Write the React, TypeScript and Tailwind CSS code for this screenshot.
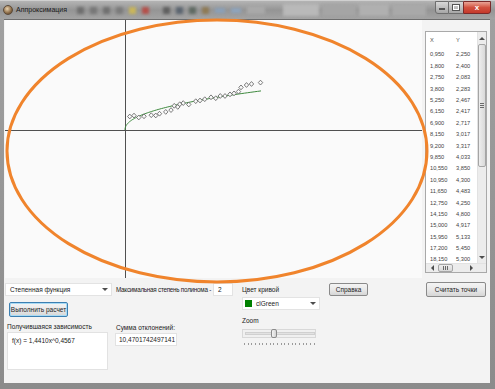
import React from 'react';

const tableData: [string, string][] = [
  ['0,950', '2,250'],
  ['1,800', '2,400'],
  ['2,750', '2,083'],
  ['3,800', '2,283'],
  ['5,250', '2,467'],
  ['6,150', '2,417'],
  ['6,900', '2,717'],
  ['8,150', '3,017'],
  ['9,200', '3,317'],
  ['9,850', '4,033'],
  ['10,550', '3,850'],
  ['10,950', '4,300'],
  ['11,650', '4,483'],
  ['12,750', '4,250'],
  ['14,150', '4,800'],
  ['15,000', '4,917'],
  ['15,950', '5,133'],
  ['17,200', '5,450'],
  ['18,150', '5,300'],
];

// rest of the points, past the visible rows of the list
const morePoints: [number, number][] = [
  [19.05, 5.67], [20, 5.67], [21, 5.94], [21.8, 6.1], [22.7, 6.4], [23.2, 7.1], [24.3, 7.5], [25.3, 7.67], [27.1, 7.9],
];

const num = (s: string) => parseFloat(s.replace(',', '.'));

const FONT = "font-['Liberation_Sans',Arial,sans-serif]";

const Chart: React.FC = () => {
  const ox = 120, oy = 110, sx = 5, sy = 6;
  const pts: [number, number][] = [...tableData.map(([x, y]) => [num(x), num(y)] as [number, number]), ...morePoints];
  const curve = Array.from({ length: 80 }, (_, i) => {
    const x = 27.2 * Math.pow(i / 79, 2);
    return `${(ox + x * sx).toFixed(2)},${(oy - 1.441 * Math.pow(x, 0.4567) * sy).toFixed(2)}`;
  }).join(' ');

  return (
    <svg width={417} height={258} className="block">
      <line x1={0} y1={oy + 0.5} x2={417} y2={oy + 0.5} stroke="#505050" strokeWidth={1} />
      <line x1={ox + 0.5} y1={0} x2={ox + 0.5} y2={258} stroke="#505050" strokeWidth={1} />
      <polyline points={curve} fill="none" stroke="#3f8a3f" strokeWidth={1} />
      {pts.map(([x, y], i) => {
        const cx = ox + x * sx, cy = oy - y * sy;
        return (
          <polygon
            key={i}
            points={`${cx},${cy - 2.4} ${cx + 2.2},${cy} ${cx},${cy + 2.4} ${cx - 2.2},${cy}`}
            fill="#fafafa"
            stroke="#5a5a5a"
            strokeWidth={0.8}
          />
        );
      })}
    </svg>
  );
};

const WinButton: React.FC<{ label: string; className?: string; def?: boolean }> = ({ label, className = '', def }) => (
  <div
    className={`flex items-center justify-center whitespace-nowrap rounded-[2px] border text-[6.5px] text-[#222] bg-gradient-to-b from-[#f4f4f4] via-[#e9e9e9] to-[#d6d6d6] ${
      def ? 'border-[#3c7fb1] shadow-[inset_0_0_0_1px_#a8dbf5]' : 'border-[#8a8a8a]'
    } ${className}`}
  >
    {label}
  </div>
);

const Arrow: React.FC<{ dir: 'up' | 'down' | 'left' | 'right' }> = ({ dir }) => {
  const p = {
    up: '0,3 3,0 6,3',
    down: '0,0 3,3 6,0',
    left: '3,0 0,3 3,6',
    right: '0,0 3,3 0,6',
  }[dir];
  const w = dir === 'up' || dir === 'down' ? 6 : 3;
  const h = dir === 'up' || dir === 'down' ? 3 : 6;
  return (
    <svg width={w} height={h} className="block">
      <polygon points={p} fill="#4d4d4d" />
    </svg>
  );
};

const PointsTable: React.FC = () => (
  <div className="w-[62px] h-[242px] bg-white border border-[#a9a9a9] flex flex-col">
    <div className="flex flex-1 min-h-0">
      <div className="flex-1 overflow-hidden text-[5.7px] text-[#444]">
        <div className="h-[17px] flex items-center text-[#555]">
          <span className="w-[30px] pl-[4px]">X</span>
          <span>Y</span>
        </div>
        {tableData.map(([x, y]) => (
          <div key={x} className="h-[11.4px] flex items-center">
            <span className="w-[30px] pl-[4px]">{x}</span>
            <span>{y}</span>
          </div>
        ))}
      </div>
      <div className="w-[9px] bg-[#ececec] border-l border-[#e2e2e2] flex flex-col items-center">
        <div className="h-[12px] flex items-center justify-center">
          <Arrow dir="up" />
        </div>
        <div className="w-[8px] h-[123px] bg-gradient-to-r from-[#eeeeee] to-[#d9d9d9] border border-[#a5a5a5] rounded-[2px] flex flex-col items-center justify-center gap-[1px]">
          <div className="w-[4px] h-[1px] bg-[#6a6a6a]" />
          <div className="w-[4px] h-[1px] bg-[#6a6a6a]" />
          <div className="w-[4px] h-[1px] bg-[#6a6a6a]" />
        </div>
        <div className="flex-1" />
        <div className="h-[12px] flex items-center justify-center">
          <Arrow dir="down" />
        </div>
      </div>
    </div>
    <div className="h-[9px] flex bg-[#ececec] border-t border-[#e2e2e2]">
      <div className="flex-1 flex items-center">
        <div className="w-[12px] flex justify-center">
          <Arrow dir="left" />
        </div>
        <div className="w-[15px] h-[8px] bg-gradient-to-b from-[#eeeeee] to-[#d9d9d9] border border-[#a5a5a5] rounded-[2px] flex items-center justify-center gap-[1px]">
          <div className="w-[1px] h-[4px] bg-[#6a6a6a]" />
          <div className="w-[1px] h-[4px] bg-[#6a6a6a]" />
          <div className="w-[1px] h-[4px] bg-[#6a6a6a]" />
        </div>
        <div className="flex-1" />
        <div className="w-[12px] flex justify-center">
          <Arrow dir="right" />
        </div>
      </div>
      <div className="w-[9px] bg-[#ececec]" />
    </div>
  </div>
);

const TitleBar: React.FC = () => (
  <div className="h-[19px] flex items-center overflow-hidden bg-gradient-to-b from-[#b4b4b4] via-[#959595] to-[#a3a3a3] border-t border-[#d0d0d0]">
    <div className="ml-[3px] w-[10px] h-[10px] rounded-full bg-[radial-gradient(circle_at_40%_35%,#e9d2ae,#8a6a45_60%,#4d3a28)] border border-[#5b4a3a]" />
    <span className={`ml-[3px] text-[7px] text-[#1a1a1a] ${FONT}`}>Аппроксимация</span>
    <div className="ml-[10px] flex items-center gap-[6px] blur-[1.5px]">
      <div className="w-[7px] h-[7px] bg-[#6e6e6e]" />
      <div className="w-[7px] h-[7px] bg-[#777]" />
      <div className="w-[7px] h-[7px] bg-[#707070]" />
      <div className="w-[7px] h-[7px] bg-[#7a7a7a]" />
      <div className="w-[7px] h-[7px] bg-[#c9b65a]" />
      <div className="w-[7px] h-[7px] bg-[#b5504a]" />
      <div className="ml-[8px] w-[7px] h-[7px] bg-[#5f5f5f]" />
      <div className="w-[7px] h-[7px] bg-[#5b6570]" />
      <div className="w-[7px] h-[7px] bg-[#5f6a63]" />
      <div className="w-[7px] h-[7px] bg-[#8f7a55]" />
      <div className="w-[10px] h-[5px] bg-[#8aa0b8]" />
      <div className="w-[10px] h-[5px] bg-[#8ea4bd]" />
      <div className="w-[18px] h-[8px] bg-[#a9a9a9]" />
    </div>
    <div className="ml-[18px] flex items-center gap-[3px] blur-[1.5px]">
      <div className="w-[36px] h-[12px] bg-[#b9b9b9]" />
      <div className="w-[34px] h-[12px] bg-[#a5a5a5]" />
      <div className="w-[30px] h-[12px] bg-[#b0b0b0]" />
      <div className="w-[34px] h-[12px] bg-[#a9a9a9]" />
    </div>
    <div className="flex-1" />
    <div className="self-start flex mr-[4px]">
      <div className="w-[14px] h-[13px] border border-[#6e6e6e] rounded-bl-[3px] bg-gradient-to-b from-[#d8d8d8] to-[#a6a6a6] flex items-end justify-center pb-[3px]">
        <div className="w-[6px] h-[2px] bg-white border border-[#555]" />
      </div>
      <div className="w-[14px] h-[13px] border-y border-[#6e6e6e] bg-gradient-to-b from-[#d8d8d8] to-[#a6a6a6] flex items-center justify-center">
        <div className="w-[6px] h-[5px] border-[1.5px] border-white outline outline-1 outline-[#555]" />
      </div>
      <div className="w-[28px] h-[13px] border border-[#7a2a2a] rounded-br-[3px] bg-gradient-to-b from-[#e8a396] via-[#d2513f] to-[#c4382a] flex items-center justify-center">
        <span className={`text-[8px] font-bold text-white leading-none ${FONT}`}>x</span>
      </div>
    </div>
  </div>
);

export default function App() {
  return (
    <div className={`relative w-[495px] h-[389px] overflow-hidden flex flex-col bg-gradient-to-b from-[#9c9c9c] to-[#7f7f7f] ${FONT}`}>
      <TitleBar />
      <div className="flex-1 flex pl-[4px] pr-[5px] pb-[6px] bg-gradient-to-b from-[#a0a0a0] to-[#8b8b8b]">
        <div className="flex-1 flex bg-[#f3f3f3] border-t border-[#6d6d6d] pl-[1px] text-[#222]">
          {/* left part: chart and controls */}
          <div className="w-[417px] flex flex-col">
            <div className="h-[258px] bg-[#fafafa]">
              <Chart />
            </div>
            <div className="flex text-[6.5px]">
              <div className="w-[107px] flex flex-col">
                <div className="mt-[5px] h-[13px] bg-white border border-[#e3e3e3] flex items-center pl-[4px] pr-[3px]">
                  <span className="flex-1">Степенная функция</span>
                  <Arrow dir="down" />
                </div>
                <WinButton label="Выполнить расчет" def className="mt-[6px] ml-[4px] w-[59px] h-[15px]" />
                <span className="mt-[5px] ml-[2px] h-[9px] leading-[9px] whitespace-nowrap">Получившаяся зависимость</span>
                <div className="mt-[1px] ml-[2px] w-[101px] h-[38px] bg-white border border-[#e2e2e2] pl-[4px] pt-[3px] text-[6.5px]">
                  f(x) = 1,4410x^0,4567
                </div>
              </div>
              <div className="ml-[3px] w-[120px] flex flex-col">
                <div className="mt-[5px] h-[13px] flex items-center">
                  <span className="ml-[1px] w-[97px] flex-none whitespace-nowrap text-[6.3px] tracking-[-0.25px]">Максимальная степень полинома -</span>
                  <div className="w-[20px] h-[13px] flex-none bg-white border border-[#e3e3e3] flex items-center pl-[4px]">2</div>
                </div>
                <span className="mt-[27px] ml-[1px] h-[9px] leading-[9px] whitespace-nowrap">Сумма отклонений:</span>
                <div className="mt-[1px] w-[62px] h-[13px] bg-white border border-[#e2e2e2] flex items-center pl-[3px] whitespace-nowrap">
                  10,4701742497141
                </div>
              </div>
              <div className="ml-[7px] w-[78px] flex flex-col">
                <span className="mt-[7px] h-[9px] leading-[9px]">Цвет кривой</span>
                <div className="mt-[3px] h-[13px] bg-white border border-[#e3e3e3] flex items-center pl-[2px] pr-[3px]">
                  <div className="w-[7px] h-[7px] bg-[#008000]" />
                  <span className="ml-[4px] flex-1">clGreen</span>
                  <Arrow dir="down" />
                </div>
                <span className="mt-[6px] h-[9px] leading-[9px]">Zoom</span>
                <div className="mt-[4px] w-[74px] h-[9px] relative border border-[#d8d8d8] bg-[#f0f0f0] flex items-center">
                  <div className="ml-[2px] w-[70px] h-[3px] bg-[#e2e2e2] border border-[#d0d0d0]" />
                  <div className="absolute left-[28px] top-[-1px] w-[6px] h-[9px] rounded-[2px] border border-[#8a8a8a] bg-gradient-to-r from-[#f4f4f4] to-[#d4d4d4]" />
                </div>
                <div className="mt-[5px] ml-[2px] w-[71px] flex justify-between">
                  {Array.from({ length: 20 }, (_, i) => (
                    <div key={i} className="w-[1px] h-[2px] bg-[#9a9a9a]" />
                  ))}
                </div>
              </div>
              <div className="ml-[9px] flex flex-col">
                <WinButton label="Справка" className="mt-[5px] w-[39px] h-[13px]" />
              </div>
            </div>
          </div>

          {/* right part: point list */}
          <div className="ml-[3px] flex flex-col">
            <div className="mt-[11px]">
              <PointsTable />
            </div>
            <WinButton label="Считать точки" className="mt-[9px] ml-[1px] w-[60px] h-[15px]" />
          </div>
        </div>
      </div>

      {/* hand-drawn marker over the screenshot */}
      <svg width={495} height={389} className="absolute left-0 top-0 pointer-events-none">
        <ellipse cx={217} cy={151} rx={210} ry={131} fill="none" stroke="#f0842c" strokeWidth={3} />
      </svg>
    </div>
  );
}
